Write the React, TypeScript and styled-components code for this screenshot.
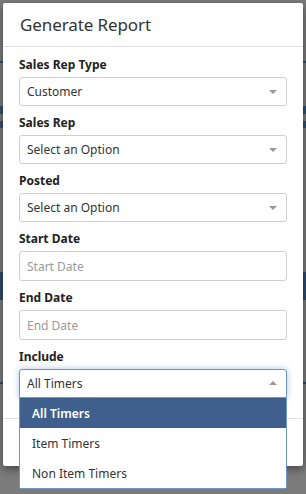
import React from "react";
import styled, { createGlobalStyle } from "styled-components";

const Global = createGlobalStyle`
  html, body { margin: 0; padding: 0; }
  body {
    width: 306px;
    height: 494px;
    overflow: hidden;
    font-family: "Noto Sans", "Open Sans", Arial, sans-serif;
    background-color: #7b7b7b;
    background-image: linear-gradient(
      to bottom,
      transparent 61px, #2f4a6b 61px, #2f4a6b 63px, transparent 63px,
      transparent 106px, #34506f 106px, #34506f 114px, transparent 114px,
      transparent 121px, #34506f 121px, #34506f 128px, transparent 128px,
      transparent 272px, #2f4a6b 272px, #2f4a6b 300px, transparent 300px,
      transparent 382px, #2f4a6b 382px, #2f4a6b 384px, transparent 384px
    );
  }
`;

const Modal = styled.div`
  position: relative;
  margin: 3px 3px 0 3px;
  width: 300px;
  background: #fff;
  border-radius: 2px;
  box-shadow: 0 3px 9px rgba(0, 0, 0, 0.45);
`;

const Header = styled.div`
  height: 43px;
  display: flex;
  align-items: center;
  padding: 0 16px 0 17px;
  border-bottom: 1px solid #e2e2e2;
`;

const Title = styled.h4`
  margin: 0;
  font-size: 17px;
  font-weight: 400;
  color: #333;
  letter-spacing: -0.1px;
`;

const Body = styled.div`
  display: flex;
  flex-direction: column;
  gap: 9px;
  padding: 10px 16px 20px 16px;
`;

const Group = styled.div`
  position: relative;
  display: flex;
  flex-direction: column;
`;

const Label = styled.label`
  font-size: 12px;
  font-weight: 700;
  color: #222;
  line-height: 16px;
  margin-bottom: 4px;
`;

const Control = styled.div<{ $h: number; $focused?: boolean; $open?: boolean }>`
  box-sizing: border-box;
  height: ${(p) => p.$h}px;
  display: flex;
  align-items: center;
  justify-content: space-between;
  padding: 0 9px 0 7px;
  border: 1px solid ${(p) => (p.$focused ? "#6d97c6" : "#cfcfcf")};
  border-radius: ${(p) => (p.$open ? "3px 3px 0 0" : "3px")};
  box-shadow: ${(p) =>
    p.$focused ? "0 0 6px rgba(102, 150, 210, 0.55)" : "none"};
  font-size: 12px;
  color: #333;
  background: #fff;
`;

const Placeholder = styled.span`
  color: #9a9a9a;
`;

const Caret = styled.span<{ $up?: boolean }>`
  width: 0;
  height: 0;
  border-left: 4px solid transparent;
  border-right: 4px solid transparent;
  ${(p) =>
    p.$up
      ? "border-bottom: 4px solid #999; margin-top: -2px;"
      : "border-top: 4px solid #999; margin-top: 1px;"}
`;

const Footer = styled.div`
  height: 47px;
  border-top: 1px solid #e2e2e2;
`;

const Menu = styled.ul`
  position: absolute;
  left: 0;
  right: 0;
  top: 100%;
  margin: 0;
  padding: 0;
  list-style: none;
  background: #fff;
  border: 1px solid #6d97c6;
  border-top: none;
  border-radius: 0 0 3px 3px;
  z-index: 5;
`;

const Option = styled.li<{ $active?: boolean }>`
  height: 30px;
  display: flex;
  align-items: center;
  padding-left: 12px;
  font-size: 12px;
  color: ${(p) => (p.$active ? "#fff" : "#333")};
  background: ${(p) => (p.$active ? "#3f5f8c" : "#fff")};
  font-weight: ${(p) => (p.$active ? 600 : 400)};
`;

type Field =
  | { label: string; kind: "select"; value: string }
  | { label: string; kind: "input"; placeholder: string };

const fields: Field[] = [
  { label: "Sales Rep Type", kind: "select", value: "Customer" },
  { label: "Sales Rep", kind: "select", value: "Select an Option" },
  { label: "Posted", kind: "select", value: "Select an Option" },
  { label: "Start Date", kind: "input", placeholder: "Start Date" },
  { label: "End Date", kind: "input", placeholder: "End Date" },
];

const options = ["All Timers", "Item Timers", "Non Item Timers"];

export default function App() {
  return (
    <>
      <Global />
      <Modal>
        <Header>
          <Title>Generate Report</Title>
        </Header>
        <Body>
          {fields.map((f) => (
            <Group key={f.label}>
              <Label>{f.label}</Label>
              {f.kind === "select" ? (
                <Control $h={29}>
                  <span>{f.value}</span>
                  <Caret />
                </Control>
              ) : (
                <Control $h={30}>
                  <Placeholder>{f.placeholder}</Placeholder>
                </Control>
              )}
            </Group>
          ))}
          <Group>
            <Label>Include</Label>
            <Control $h={29} $focused $open>
              <span>All Timers</span>
              <Caret $up />
            </Control>
            <Menu>
              {options.map((o, i) => (
                <Option key={o} $active={i === 0}>
                  {o}
                </Option>
              ))}
            </Menu>
          </Group>
        </Body>
        <Footer />
      </Modal>
    </>
  );
}
